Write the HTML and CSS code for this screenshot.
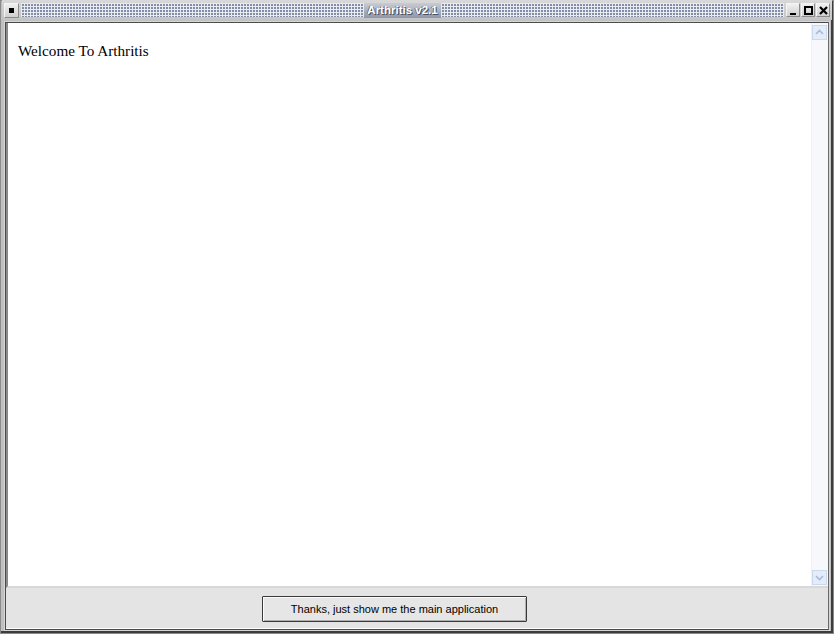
FILE: index.html
```html
<!DOCTYPE html>
<html>
<head>
<meta charset="utf-8">
<link rel="stylesheet" href="styles.css">
</head>
<body>
<div class="window">
  <div class="titlebar">
    <div class="tbtn menu"><span class="menu-dot"></span></div>
    <div class="pattern">
      <span class="title">Arthritis v2.1</span>
    </div>
    <div class="tbtn min"><svg width="13" height="13" viewBox="0 0 13 13"><rect x="3" y="9" width="6" height="2" fill="#000"/></svg></div>
    <div class="tbtn max"><svg width="13" height="13" viewBox="0 0 13 13"><rect x="3" y="3" width="7" height="7" fill="none" stroke="#000" stroke-width="2"/></svg></div>
    <div class="tbtn close"><svg width="13" height="13" viewBox="0 0 13 13"><path d="M3 3 L10 10 M10 3 L3 10" stroke="#000" stroke-width="2.2"/></svg></div>
  </div>
  <div class="frame">
    <div class="content">
      <div class="doc">
        <p class="welcome">Welcome To Arthritis</p>
      </div>
      <div class="scrollbar">
        <div class="arrow"><svg width="15" height="15" viewBox="0 0 15 15"><path d="M4 9 L7.5 5.5 L11 9" fill="none" stroke="#a9b9d6" stroke-width="1.6"/></svg></div>
        <div class="track"></div>
        <div class="arrow"><svg width="15" height="15" viewBox="0 0 15 15"><path d="M4 6 L7.5 9.5 L11 6" fill="none" stroke="#a9b9d6" stroke-width="1.6"/></svg></div>
      </div>
    </div>
    <div class="footer">
      <button class="main-btn">Thanks, just show me the main application</button>
    </div>
  </div>
</div>
</body>
</html>
```

FILE: styles.css
```css
html, body {
  margin: 0;
  padding: 0;
  background: #ffffff;
}

.window {
  width: 834px;
  height: 634px;
  box-sizing: border-box;
  display: flex;
  flex-direction: column;
  background: #c0c0c0;
  padding: 0 2px 2px 2px;
  box-shadow: inset 0 0 0 1px #8a8a8a, inset -1px -1px 0 2px #3c3c3c;
}

.titlebar {
  height: 20px;
  display: flex;
  align-items: center;
  padding: 0 2px 0 1px;
  background: linear-gradient(#d8d8d8, #c4c4c4);
}

.tbtn {
  width: 14px;
  height: 14px;
  box-sizing: border-box;
  background: linear-gradient(#f0f0f0, #cfcfcf);
  border: 1px solid #f4f4f4;
  border-right-color: #8a8a8a;
  border-bottom-color: #8a8a8a;
  display: flex;
  align-items: center;
  justify-content: center;
  margin-left: 1px;
}

.tbtn svg {
  display: block;
  flex: none;
}

.menu {
  width: 15px;
  height: 15px;
  margin-left: 1px;
  margin-right: 1px;
}

.menu-dot {
  width: 5px;
  height: 5px;
  background: #000;
}

.pattern {
  flex: 1;
  height: 14px;
  margin: 0 1px;
  display: flex;
  align-items: center;
  justify-content: center;
  background:
    linear-gradient(90deg, #e8ebf2 1px, transparent 1px) 0 0 / 3px 3px,
    linear-gradient(#e8ebf2 1px, #848da6 1px) 0 0 / 3px 3px;
}

.title {
  font-family: "Liberation Sans", Arial, sans-serif;
  font-weight: bold;
  font-size: 11.5px;
  color: #ffffff;
  line-height: 15px;
  padding: 0 3px;
  background: linear-gradient(#c9ccd4, #8f96a8);
  text-shadow: 1px 1px 0 #4a4f5c, -1px 0 0 #6a7080;
}

.frame {
  flex: 1;
  display: flex;
  flex-direction: column;
  margin: 2px 3px 2px 3px;
  border: 1px solid #4a4a4a;
  border-right-color: #6a6a6a;
  background: #ffffff;
  box-shadow: 0 0 0 1px #d6d6d6;
}

.content {
  flex: 1;
  display: flex;
  border-bottom: 2px solid #d8d8d8;
  border-left: 2px solid #8a8a8a;
}

.doc {
  flex: 1;
  background: #ffffff;
}

.welcome {
  margin: 19px 0 0 10px;
  font-family: "Liberation Serif", "Times New Roman", serif;
  font-size: 15.2px;
  color: #000000;
}

.scrollbar {
  width: 16px;
  display: flex;
  flex-direction: column;
  padding: 2px 0 1px 0;
  background: #f6f8fc;
  border-left: 1px solid #eef1f6;
}

.arrow {
  width: 15px;
  height: 15px;
  box-sizing: border-box;
  background: #e4ecfa;
  border: 1px solid #cbd8ee;
  display: flex;
  align-items: center;
  justify-content: center;
}

.arrow svg {
  display: block;
  flex: none;
  margin: -1px;
}

.track {
  flex: 1;
}

.footer {
  height: 40px;
  background: #e4e4e4;
  display: flex;
  align-items: center;
  padding-left: 256px;
  border-bottom: 1px solid #ffffff;
}

.main-btn {
  width: 265px;
  height: 26px;
  margin-top: 1px;
  box-sizing: border-box;
  font-family: "Liberation Sans", Arial, sans-serif;
  font-size: 11px;
  color: #000;
  background: #e6e6e6;
  border: 1px solid #3a3a3a;
  border-radius: 1px;
  box-shadow: inset 1px 1px 0 #fbfbfb, inset -1px -1px 0 #b0b0b0;
  padding: 0;
}
```
